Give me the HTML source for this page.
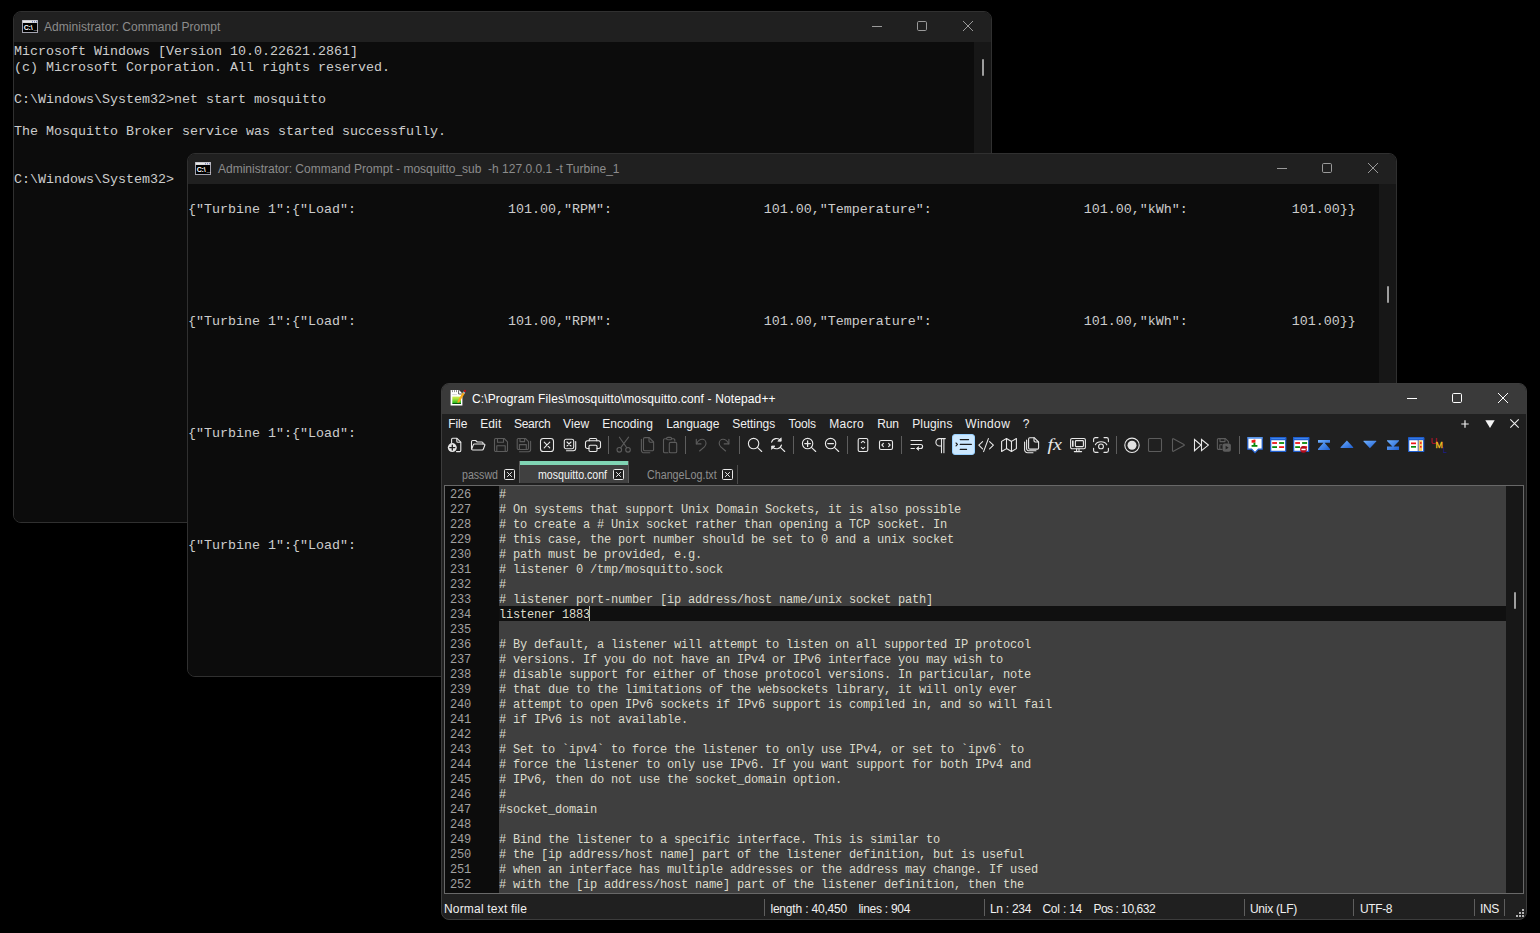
<!DOCTYPE html><html><head><meta charset="utf-8"><title>Desktop</title><style>
*{box-sizing:border-box}
html,body{margin:0;padding:0}
body{width:1540px;height:933px;background:#000;overflow:hidden;position:relative;font-family:"Liberation Sans",sans-serif;font-size:12px;color:#fff}
.win{position:absolute;border:1px solid #303030;border-radius:8px;overflow:hidden}
.tb{position:absolute;left:0;top:0;right:0;height:30px;background:#202020}
.tt{position:absolute;top:0;height:30px;line-height:30px;font-size:12px;color:#8c8c8c;white-space:pre}
.cmd{background:#0c0c0c}
.cmd .body{position:absolute;left:0;top:30px;right:0;bottom:0;background:#0c0c0c}
.cmd .sb{position:absolute;top:30px;right:0;bottom:0;width:17px;background:#171717}
.cmd .th{position:absolute;width:2px;background:#9e9e9e;border-radius:1px}
pre{margin:0}
.con{position:absolute;left:0;top:32px;font-family:"Liberation Mono",monospace;font-size:13.33px;letter-spacing:0;line-height:16px;color:#cccccc;white-space:pre}
.abs{position:absolute}
svg{position:absolute;overflow:visible}
.cap svg{stroke:#9a9a9a;fill:none;stroke-width:1}
.npp{background:#202020;border-color:#3c3c3c}
.npp .tb{background:#3a3a3a}
.npp .tt{color:#fff}
.npp .cap svg{stroke:#fff}
.menu span{position:absolute;top:0;line-height:20px;font-size:12px;color:#f0f0f0;white-space:pre}
.tab{position:absolute;font-size:10.6px;white-space:pre;line-height:14px}
.xb{position:absolute;width:11px;height:11px;border:1px solid #d8d8d8;border-radius:1px}
.ed{position:absolute;left:2px;top:101px;width:1080px;height:409px;border:1px solid #686868;background:#3f3f3f;overflow:hidden}
.code{position:absolute;left:54px;top:2px;font-family:"Liberation Mono",monospace;font-size:12px;letter-spacing:-0.2px;line-height:15px;color:#dcdccc;white-space:pre}
.ln{position:absolute;left:0;top:0;width:54px;height:407px;background:#0c0c0c}
.ln pre{position:absolute;left:5px;top:2px;font-family:"Liberation Mono",monospace;font-size:12px;letter-spacing:-0.2px;line-height:15px;color:#a0a0a0;white-space:pre}
.st span{position:absolute;top:1px;line-height:22px;font-size:12px;color:#f0f0f0;white-space:pre}
.st i{position:absolute;top:2px;width:1px;height:17px;background:#5e5e5e}
.sep{position:absolute;top:52px;width:1px;height:18px;background:#5e5e5e}
.ic{position:absolute;top:53px;width:16px;height:16px}
.ic svg{left:0;top:0;width:16px;height:16px;fill:none;stroke:#e8e8e8;stroke-width:1.1;stroke-linecap:round;stroke-linejoin:round}
.ic.d svg{stroke:#5c5c5c}
</style></head><body><div class="win cmd" style="left:13px;top:11px;width:979px;height:512px"><div class="body"></div><div class="tb"></div><svg style="left:8px;top:8px" width="16" height="13" viewBox="0 0 16 13"><rect x="0" y="0" width="16" height="13" fill="#a4a4b0"/><rect x="0.6" y="0.5" width="14.8" height="2.3" fill="#e6e6e6"/><path d="M10 1.2h1v1h-1zM12 1.2h1v1h-1zM14 1.2h1v1h-1z" fill="#5560a8"/><rect x="1" y="3" width="14" height="9" fill="#000"/><text x="1.7 6.5 8.7 11.7" y="10" font-family="Liberation Sans,sans-serif" font-size="7" font-weight="bold" fill="#fff">C:\_</text></svg><div class="tt" style="left:30px;letter-spacing:0.061px">Administrator: Command Prompt</div><div class="cap"><svg style="left:858px;top:9px" width="10" height="10" viewBox="0 0 10 10"><path d="M0 5.5H10"/></svg><svg style="left:903px;top:9px" width="10" height="10" viewBox="0 0 10 10"><rect x="0.5" y="0.5" width="9" height="9" rx="1.2"/></svg><svg style="left:949px;top:9px" width="10" height="10" viewBox="0 0 10 10"><path d="M0 0L10 10M10 0L0 10"/></svg></div><div class="sb"></div><div class="th" style="left:968px;top:47px;height:17px"></div><pre class="con">Microsoft Windows [Version 10.0.22621.2861]
(c) Microsoft Corporation. All rights reserved.

C:\Windows\System32&gt;net start mosquitto

The Mosquitto Broker service was started successfully.


C:\Windows\System32&gt;</pre></div><div class="win cmd" style="left:187px;top:153px;width:1210px;height:524px"><div class="body"></div><div class="tb"></div><svg style="left:7px;top:8px" width="16" height="13" viewBox="0 0 16 13"><rect x="0" y="0" width="16" height="13" fill="#a4a4b0"/><rect x="0.6" y="0.5" width="14.8" height="2.3" fill="#e6e6e6"/><path d="M10 1.2h1v1h-1zM12 1.2h1v1h-1zM14 1.2h1v1h-1z" fill="#5560a8"/><rect x="1" y="3" width="14" height="9" fill="#000"/><text x="1.7 6.5 8.7 11.7" y="10" font-family="Liberation Sans,sans-serif" font-size="7" font-weight="bold" fill="#fff">C:\_</text></svg><div class="tt" style="left:30px;letter-spacing:-0.0px">Administrator: Command Prompt - mosquitto_sub  -h 127.0.0.1 -t Turbine_1</div><div class="cap"><svg style="left:1089px;top:9px" width="10" height="10" viewBox="0 0 10 10"><path d="M0 5.5H10"/></svg><svg style="left:1134px;top:9px" width="10" height="10" viewBox="0 0 10 10"><rect x="0.5" y="0.5" width="9" height="9" rx="1.2"/></svg><svg style="left:1180px;top:9px" width="10" height="10" viewBox="0 0 10 10"><path d="M0 0L10 10M10 0L0 10"/></svg></div><div class="sb"></div><div class="th" style="left:1199px;top:132px;height:17px"></div><pre class="con">

{"Turbine 1":{"Load":                   101.00,"RPM":                   101.00,"Temperature":                   101.00,"kWh":             101.00}}






{"Turbine 1":{"Load":                   101.00,"RPM":                   101.00,"Temperature":                   101.00,"kWh":             101.00}}






{"Turbine 1":{"Load":                   101.00,"RPM":                   101.00,"Temperature":                   101.00,"kWh":             101.00}}






{"Turbine 1":{"Load":                   101.00,"RPM":                   101.00,"Temperature":                   101.00,"kWh":             101.00}}</pre></div><div class="win npp" style="left:441px;top:383px;width:1086px;height:537px"><div class="tb"></div><svg style="left:7px;top:5px" width="18" height="18" viewBox="0 0 18 18"><defs><linearGradient id="ng" x1="0" y1="0" x2="0" y2="1"><stop offset="0" stop-color="#d0ec48"/><stop offset="0.3" stop-color="#a8e040"/><stop offset="0.8" stop-color="#38c020"/><stop offset="0.86" stop-color="#0a6a08"/><stop offset="1" stop-color="#064a06"/></linearGradient></defs><path d="M1.6 1H10L13.4 4.4V16.4H1.6Z" fill="#fff"/><path d="M9.6 1.2V5H13.4" fill="none" stroke="#4a4a4a" stroke-width="0.9"/><path d="M2.8 1.6H3.9L3.35 3.5ZM4.9 1.6H6L5.45 3.5ZM7 1.6H8.1L7.55 3.5Z" fill="#303030"/><path d="M3.2 5.6H8" stroke="#b8b8b8" stroke-width="0.6"/><rect x="3.3" y="7.6" width="8.7" height="7.4" fill="url(#ng)"/><path d="M14.3 2.6L16.2 3.8L10.3 13.2L8.5 14.1L8.6 12Z" fill="#f8a818"/><path d="M14.3 2.6L16.2 3.8L15.6 4.8L13.7 3.6Z" fill="#8cacd4"/><circle cx="15.9" cy="1.9" r="1.15" fill="#c00c18"/></svg><div class="tt" style="left:30px;letter-spacing:0.13px">C:\Program Files\mosquitto\mosquitto.conf - Notepad++</div><div class="cap"><svg style="left:965px;top:9px" width="10" height="10" viewBox="0 0 10 10"><path d="M0 5.5H10"/></svg><svg style="left:1010px;top:9px" width="10" height="10" viewBox="0 0 10 10"><rect x="0.5" y="0.5" width="9" height="9" rx="1.2"/></svg><svg style="left:1056px;top:9px" width="10" height="10" viewBox="0 0 10 10"><path d="M0 0L10 10M10 0L0 10"/></svg></div><div class="menu abs" style="left:0;top:30px;width:1084px;height:20px"><span style="left:6.2px;letter-spacing:-0.036px">File</span><span style="left:38.2px;letter-spacing:0.128px">Edit</span><span style="left:71.9px;letter-spacing:-0.255px">Search</span><span style="left:121.0px;letter-spacing:0.151px">View</span><span style="left:160.2px;letter-spacing:0.082px">Encoding</span><span style="left:224.2px;letter-spacing:-0.024px">Language</span><span style="left:290.2px;letter-spacing:-0.057px">Settings</span><span style="left:346.5px;letter-spacing:-0.123px">Tools</span><span style="left:387.2px;letter-spacing:0.271px">Macro</span><span style="left:435.2px;letter-spacing:-0.139px">Run</span><span style="left:470.2px;letter-spacing:0.149px">Plugins</span><span style="left:523.2px;letter-spacing:0.385px">Window</span><span style="left:580.8px;letter-spacing:-0.088px">?</span></div><svg style="left:1019px;top:36px" width="8" height="8" viewBox="0 0 8 8"><path d="M4 0.3V7.7M0.3 4H7.7" stroke="#f0f0f0" stroke-width="1.2" fill="none"/></svg><svg style="left:1043px;top:36px" width="10" height="8" viewBox="0 0 10 8"><path d="M0.3 0.3H9.7L5 8Z" fill="#f4f4f4"/></svg><svg style="left:1068px;top:35px" width="9" height="9" viewBox="0 0 9 9"><path d="M0.3 0.3L8.7 8.7M8.7 0.3L0.3 8.7" stroke="#f0f0f0" stroke-width="1.1" fill="none"/></svg><div class="ic " style="left:5px;"><svg viewBox="0 0 16 16"><path d="M4.6 5.5V2.3A1 1 0 0 1 5.6 1.3H10L13.8 5.1V13.6A1 1 0 0 1 12.8 14.6H9.5"/><path d="M9.8 1.5V4.3A1 1 0 0 0 10.8 5.3H13.6"/><circle cx="5.3" cy="10.6" r="4.5" fill="#e6e6e6" stroke="none"/><path d="M5.3 8.1V13.1M2.8 10.6H7.8" stroke="#202020" stroke-width="1.3"/></svg></div><div class="ic " style="left:28px;"><svg viewBox="0 0 16 16"><path d="M1.5 11.8V4.8A1.3 1.3 0 0 1 2.8 3.5H5.6L7.2 5H11.8A1.3 1.3 0 0 1 13.1 6.3V7"/><path d="M1.6 12.2L3.3 7.9A1.3 1.3 0 0 1 4.5 7H14A0.9 0.9 0 0 1 14.8 8.2L13.4 12A1.4 1.4 0 0 1 12.1 13H2.6A1.1 1.1 0 0 1 1.6 12.2Z"/></svg></div><div class="ic d" style="left:51px;"><svg viewBox="0 0 16 16"><path d="M2.8 1.5H11.2L14.5 4.8V13.2A1.3 1.3 0 0 1 13.2 14.5H2.8A1.3 1.3 0 0 1 1.5 13.2V2.8A1.3 1.3 0 0 1 2.8 1.5Z"/><path d="M4.5 1.5V5.2H10.5V1.5"/><path d="M3.8 14.5V8.8H12.2V14.5"/></svg></div><div class="ic d" style="left:74px;"><svg viewBox="0 0 16 16"><path d="M2.4 1.5H9.4L12.5 4.6V11.3A1.2 1.2 0 0 1 11.3 12.5H2.4A1.2 1.2 0 0 1 1.2 11.3V2.7A1.2 1.2 0 0 1 2.4 1.5Z"/><path d="M4 1.5V4.6H8.6V1.5"/><path d="M3.4 12.5V7.6H10.3V12.5"/><path d="M14.6 4.4V12.6A2.2 2.2 0 0 1 12.4 14.8H3.5"/></svg></div><div class="ic " style="left:97px;"><svg viewBox="0 0 16 16"><rect x="1.5" y="1.5" width="13" height="13" rx="2.8"/><path d="M5.2 5.2L10.8 10.8M10.8 5.2L5.2 10.8"/></svg></div><div class="ic " style="left:120px;"><svg viewBox="0 0 16 16"><rect x="2.3" y="2.3" width="9.4" height="9.4" rx="1.8"/><path d="M5 5L9 9M9 5L5 9"/><path d="M13.7 4.5V11.3A2.5 2.5 0 0 1 11.2 13.8H4.5"/></svg></div><div class="ic " style="left:143px;"><svg viewBox="0 0 16 16"><path d="M4.2 3.8V2.8A1.3 1.3 0 0 1 5.5 1.5H10.5A1.3 1.3 0 0 1 11.8 2.8V3.8"/><path d="M4 11.5H2.3A1.8 1.8 0 0 1 0.5 9.7V5.6A1.8 1.8 0 0 1 2.3 3.8H13.7A1.8 1.8 0 0 1 15.5 5.6V9.7A1.8 1.8 0 0 1 13.7 11.5H12"/><rect x="4" y="8.3" width="8" height="6.2" rx="1.2"/></svg></div><div class="sep" style="left:166px"></div><div class="ic d" style="left:174px;"><svg viewBox="0 0 16 16"><circle cx="3.3" cy="12.8" r="2.3"/><circle cx="12" cy="12.8" r="2.3"/><path d="M3.4 0.2L10.8 10.8M12.6 0.2L4.6 10.8"/></svg></div><div class="ic d" style="left:197px;"><svg viewBox="0 0 16 16"><path d="M5.8 0.6H10.2L14.6 5V12.4A1.3 1.3 0 0 1 13.3 13.7H5.8A1.3 1.3 0 0 1 4.5 12.4V1.9A1.3 1.3 0 0 1 5.8 0.6Z"/><path d="M10 0.8V4A1.2 1.2 0 0 0 11.2 5.2H14.4"/><path d="M2.4 2.2V13.2A2.6 2.6 0 0 0 5 15.8H10.8"/></svg></div><div class="ic d" style="left:220px;"><svg viewBox="0 0 16 16"><path d="M6 15.8H2.8A1.3 1.3 0 0 1 1.5 14.5V3A1.3 1.3 0 0 1 2.8 1.7H4.5M9.7 1.7H11.5A1.3 1.3 0 0 1 12.8 3V4"/><rect x="4.6" y="0.4" width="5" height="2.4" rx="1.2"/><rect x="7.3" y="5.4" width="7.4" height="10.4" rx="1.3"/></svg></div><div class="sep" style="left:243px"></div><div class="ic d" style="left:251px;"><svg viewBox="0 0 16 16"><path d="M3.3 2.2V6.9H8"/><path d="M3.5 6.7C5 3.8 7 2.3 9.2 2.3C11.5 2.3 13 4.2 13 6.3C13 7.8 12.4 8.9 11.4 9.8L6.6 14"/></svg></div><div class="ic d" style="left:274px;"><svg viewBox="0 0 16 16"><g transform="translate(16.2 0) scale(-1 1)"><path d="M3.3 2.2V6.9H8"/><path d="M3.5 6.7C5 3.8 7 2.3 9.2 2.3C11.5 2.3 13 4.2 13 6.3C13 7.8 12.4 8.9 11.4 9.8L6.6 14"/></g></svg></div><div class="sep" style="left:297px"></div><div class="ic " style="left:305px;"><svg viewBox="0 0 16 16"><circle cx="6.6" cy="6.6" r="5.2"/><path d="M10.4 10.4L14.7 14.5"/></svg></div><div class="ic " style="left:328px;"><svg viewBox="0 0 16 16"><path d="M1.6 5.2A5.2 5.2 0 0 1 10.6 3.4"/><path d="M11.5 8A5.2 5.2 0 0 1 2.4 9.8"/><path d="M11.2 1.2V4.2H8.2Z" fill="#e6e6e6" stroke-width="0.8"/><path d="M1.6 12V9H4.6Z" fill="#e6e6e6" stroke-width="0.8"/><path d="M10.4 10.4L14.7 14.5"/></svg></div><div class="sep" style="left:351px"></div><div class="ic " style="left:359px;"><svg viewBox="0 0 16 16"><circle cx="6.6" cy="6.6" r="5.2"/><path d="M10.4 10.4L14.7 14.5"/><path d="M6.6 3.8V9.4M3.8 6.6H9.4" stroke-width="1.3"/></svg></div><div class="ic " style="left:382px;"><svg viewBox="0 0 16 16"><circle cx="6.6" cy="6.6" r="5.2"/><path d="M10.4 10.4L14.7 14.5"/><path d="M3.8 6.6H9.4" stroke-width="1.3"/></svg></div><div class="sep" style="left:405px"></div><div class="ic " style="left:413px;"><svg viewBox="0 0 16 16"><rect x="3.2" y="1.5" width="9.6" height="13" rx="1.6"/><path d="M6.3 5.7L8 4.2L9.7 5.7M6.3 10.3L8 11.8L9.7 10.3"/></svg></div><div class="ic " style="left:436px;"><svg viewBox="0 0 16 16"><rect x="1.5" y="3.5" width="13" height="9" rx="1.6"/><path d="M5.4 6.4L3.9 8L5.4 9.6M10.6 6.4L12.1 8L10.6 9.6"/></svg></div><div class="sep" style="left:459px"></div><div class="ic " style="left:467px;"><svg viewBox="0 0 16 16"><path d="M2 3.5H12.8M2 7.5H11.6A2 2 0 0 1 11.6 11.5H8M2 11.5H5.4"/><path d="M9.3 9.9L7.5 11.5L9.3 13.1Z" fill="#e6e6e6" stroke-width="0.8"/></svg></div><div class="ic " style="left:490px;"><svg viewBox="0 0 16 16"><path d="M13.3 1.6H7.6A3.7 3.7 0 0 0 7.6 9H9.4"/><path d="M9.5 1.6V15.8M11.9 1.6V15.8"/></svg></div><div class="abs" style="left:510px;top:50px;width:23px;height:21px;background:#cce8ff;border:1px solid #99d1ff;border-radius:3px"></div><div class="ic " style="left:513px;"><svg viewBox="0 0 16 16"><path d="M5.2 2.6H13.6M5.2 7.4H16.4M5.2 12.4H11.6M1 6L2.5 7.4L1 8.9" stroke="#1c1c1c" stroke-width="1.1"/></svg></div><div class="ic " style="left:536px;"><svg viewBox="0 0 16 16"><path d="M4.6 4.6L0.8 8.2L4.6 11.8M11.6 4.6L15.4 8.2L11.6 11.8M10.4 1.6L5.6 14.6"/></svg></div><div class="ic " style="left:559px;"><svg viewBox="0 0 16 16"><path d="M0.6 4.4L5.5 1.5L10.5 4.4L15.4 1.5V11.6L10.5 14.5L5.5 11.6L0.6 14.5Z"/><path d="M5.5 1.5V11.6M10.5 4.4V14.5"/></svg></div><div class="ic " style="left:582px;"><svg viewBox="0 0 16 16"><path d="M5.8 0.7H10.2L14.6 5V10.9A1.2 1.2 0 0 1 13.4 12.1H5.8A1.2 1.2 0 0 1 4.6 10.9V1.9A1.2 1.2 0 0 1 5.8 0.7Z"/><path d="M10 0.9V3.8A1.2 1.2 0 0 0 11.2 5H14.4"/><path d="M2.6 3V11.4A2.4 2.4 0 0 0 5 13.8H12"/><path d="M0.6 5V12.8A3 3 0 0 0 3.6 15.8H9"/></svg></div><div class="ic " style="left:605px;"><svg viewBox="0 0 16 16"><text x="0.5" y="13.2" font-family="Liberation Serif,serif" font-style="italic" font-size="17" fill="#e6e6e6" stroke="none" textLength="14.5" lengthAdjust="spacingAndGlyphs">fx</text></svg></div><div class="ic " style="left:628px;"><svg viewBox="0 0 16 16"><rect x="0.6" y="1.5" width="14.8" height="10.3" rx="1.5"/><rect x="5.4" y="3.6" width="8" height="6" rx="0.8"/><path d="M2.8 3.4V9.8" stroke-width="1.6" stroke-linecap="butt"/><path d="M6.6 12V14.4M9 12V14.4M4.3 14.6H11.6"/></svg></div><div class="ic " style="left:651px;"><svg viewBox="0 0 16 16"><path d="M0.6 4.6V2.4A1.8 1.8 0 0 1 2.4 0.6H5M11 0.6H13.6A1.8 1.8 0 0 1 15.4 2.4V4.6M15.4 11.2V13.6A1.8 1.8 0 0 1 13.6 15.4H11M5 15.4H2.4A1.8 1.8 0 0 1 0.6 13.6V11.2"/><path d="M2.4 7.8C4.4 3.8 11.6 3.8 13.8 7.8"/><circle cx="8" cy="9.4" r="2.4"/></svg></div><div class="sep" style="left:674px"></div><div class="ic " style="left:682px;"><svg viewBox="0 0 16 16"><circle cx="8" cy="8.3" r="7.2"/><circle cx="8" cy="8.3" r="4.5" fill="#e0e0e0" stroke="none"/></svg></div><div class="ic d" style="left:705px;"><svg viewBox="0 0 16 16"><rect x="1.5" y="1.5" width="13" height="13" rx="1.2"/></svg></div><div class="ic d" style="left:728px;"><svg viewBox="0 0 16 16"><path d="M2.5 2.2V13.8A0.6 0.6 0 0 0 3.4 14.3L14 8.6A0.6 0.6 0 0 0 14 7.5L3.4 1.7A0.6 0.6 0 0 0 2.5 2.2Z"/></svg></div><div class="ic " style="left:751px;"><svg viewBox="0 0 16 16"><path d="M1.5 2.5V13.7L8 8.1ZM8.5 2.5V13.7L15.4 8.1Z" stroke-linejoin="miter"/></svg></div><div class="ic d" style="left:774px;"><svg viewBox="0 0 16 16"><path d="M6 12.4H2.6A1.2 1.2 0 0 1 1.4 11.2V2.8A1.2 1.2 0 0 1 2.6 1.6H9.4L12.4 4.6V6"/><path d="M4 1.6V4.6H9V1.6M3.8 12.4V7.8H6"/><rect x="6.6" y="6.5" width="8.3" height="8.3" rx="2" fill="#5c5c5c" stroke="none"/><path d="M9.6 8.8V12.6L12.6 10.7Z" fill="#202020" stroke="none"/></svg></div><div class="sep" style="left:797px"></div><div class="ic " style="left:805px;"><svg viewBox="0 0 16 16"><path d="M0.8 0.8H15.2V12.2H11.4L8 15.6L4.6 12.2H0.8Z" fill="#fff" stroke="#1f5fd0" stroke-width="1.2" stroke-linejoin="miter"/><path d="M0.8 0.8H15.2" stroke="#6aa8f8" stroke-width="1.2"/><rect x="4.6" y="3.1" width="3.8" height="2.6" fill="#f01818" stroke="none"/><rect x="6.5" y="2.6" width="1.9" height="1" fill="#f01818" stroke="none"/><rect x="6.5" y="5.7" width="1.9" height="2.4" fill="#0a8a0a" stroke="none"/><rect x="4.6" y="8" width="5.8" height="1.8" fill="#0a8a0a" stroke="none"/></svg></div><div class="ic " style="left:828px;"><svg viewBox="0 0 16 16"><rect x="0.7" y="0.7" width="15" height="13.6" fill="#fff" stroke="#1f5fd0" stroke-width="1.2"/><rect x="0.7" y="0.7" width="15" height="1.9" fill="#4a90f0" stroke="#1f5fd0" stroke-width="1.2"/><rect x="2.2" y="5.1" width="4.8" height="1.8" fill="#f01818" stroke="none"/><rect x="9.1" y="5.1" width="5" height="1.8" fill="#0a8a0a" stroke="none"/><rect x="2.2" y="9.2" width="4.8" height="1.8" fill="#0a8a0a" stroke="none"/><rect x="9.1" y="9.2" width="5" height="1.8" fill="#f01818" stroke="none"/></svg></div><div class="ic " style="left:851px;"><svg viewBox="0 0 16 16"><rect x="0.7" y="0.7" width="15" height="13.6" fill="#fff" stroke="#1f5fd0" stroke-width="1.2"/><rect x="0.7" y="0.7" width="15" height="1.9" fill="#4a90f0" stroke="#1f5fd0" stroke-width="1.2"/><rect x="2.2" y="5.1" width="4.8" height="1.8" fill="#f01818" stroke="none"/><rect x="9.1" y="5.1" width="5" height="1.8" fill="#0a8a0a" stroke="none"/><rect x="2.2" y="9.2" width="4.8" height="1.8" fill="#0a8a0a" stroke="none"/><rect x="9.1" y="9.2" width="5" height="1.8" fill="#f01818" stroke="none"/><circle cx="10.5" cy="12.4" r="3.3" fill="#b40c1c" stroke="none"/><rect x="8.4" y="11.7" width="4.2" height="1.5" fill="#fff" stroke="none"/></svg></div><div class="ic " style="left:874px;"><svg viewBox="0 0 16 16"><defs><linearGradient id="bg" x1="0" y1="0" x2="1" y2="1"><stop offset="0" stop-color="#6fb0ff"/><stop offset="1" stop-color="#1f5fd0"/></linearGradient></defs><path d="M2 3.1H14V5.8H8.6L14 12V12.9H2V12L7.4 5.8H2Z" fill="url(#bg)" stroke="none"/></svg></div><div class="ic " style="left:897px;"><svg viewBox="0 0 16 16"><path d="M7.9 3.6L14.2 10.2V11H1.6V10.2Z" fill="url(#bg)" stroke="none"/></svg></div><div class="ic " style="left:920px;"><svg viewBox="0 0 16 16"><path d="M7.9 11.2L14.2 4.6V3.8H1.6V4.6Z" fill="url(#bg)" stroke="none"/></svg></div><div class="ic " style="left:943px;"><svg viewBox="0 0 16 16"><path d="M2 12.9H14V9.6H8.6L14 4V3.2H2V4L7.4 9.6H2Z" fill="url(#bg)" stroke="none"/></svg></div><div class="ic " style="left:966px;"><svg viewBox="0 0 16 16"><rect x="0.7" y="0.9" width="15" height="13.6" fill="#fff" stroke="#1f5fd0" stroke-width="1.2"/><rect x="0.7" y="0.9" width="15" height="1.7" fill="#4a90f0" stroke="#1f5fd0" stroke-width="1.2"/><rect x="10.6" y="3.5" width="3.6" height="10.4" fill="#f8c860" stroke="none"/><path d="M10.2 3.4V14" stroke="#2a4a90" stroke-width="0.8"/><rect x="3" y="5.5" width="5" height="1.7" fill="#f01818" stroke="none"/><rect x="3" y="9" width="5" height="1.7" fill="#0a8a0a" stroke="none"/><rect x="12" y="5.2" width="1.6" height="1.6" fill="#f01818" stroke="none"/><rect x="12" y="9" width="1.6" height="1.6" fill="#f01818" stroke="none"/></svg></div><div class="ic " style="left:989px;"><svg viewBox="0 0 16 16"><text x="-0.6" y="7.2" font-family="Liberation Sans,sans-serif" font-size="9.5" fill="#c0102c" stroke="none">U</text><text x="4.6" y="11.1" font-family="Liberation Sans,sans-serif" font-size="9.8" fill="#f8c020" stroke="#f8c020" stroke-width="0.3" textLength="7.4" lengthAdjust="spacingAndGlyphs">M</text><text x="12" y="15.9" font-family="Liberation Sans,sans-serif" font-size="9" fill="#1c1c8c" stroke="none" textLength="4" lengthAdjust="spacingAndGlyphs">L</text></svg></div><div class="abs" style="left:77px;top:77px;width:110px;height:22px;background:#404040;border-left:1px solid #5a5a5a;border-right:1px solid #5a5a5a"></div><div class="abs" style="left:78px;top:77px;width:108px;height:4px;background:#80d4b4"></div><div class="tab" style="left:20.399999999999977px;top:84px;color:#8e8e8e;font-size:12px;transform:scaleX(0.885);transform-origin:0 0">passwd</div><div class="tab" style="left:96.39999999999998px;top:84px;color:#f4f4f4;font-size:12px;transform:scaleX(0.885);transform-origin:0 0">mosquitto.conf</div><div class="tab" style="left:204.79999999999995px;top:84px;color:#8e8e8e;font-size:12px;transform:scaleX(0.893);transform-origin:0 0">ChangeLog.txt</div><svg style="left:62px;top:85px" width="11" height="11" viewBox="0 0 11 11"><rect x="0.5" y="0.5" width="10" height="10" rx="1" fill="#202020" stroke="#e8e8e8" stroke-width="1"/><path d="M3.2 3.2L7.8 7.8M7.8 3.2L3.2 7.8" stroke="#e8e8e8" stroke-width="1" fill="none"/></svg><svg style="left:171px;top:85px" width="11" height="11" viewBox="0 0 11 11"><rect x="0.5" y="0.5" width="10" height="10" rx="1" fill="#202020" stroke="#e8e8e8" stroke-width="1"/><path d="M3.2 3.2L7.8 7.8M7.8 3.2L3.2 7.8" stroke="#e8e8e8" stroke-width="1" fill="none"/></svg><svg style="left:280px;top:85px" width="11" height="11" viewBox="0 0 11 11"><rect x="0.5" y="0.5" width="10" height="10" rx="1" fill="#202020" stroke="#e8e8e8" stroke-width="1"/><path d="M3.2 3.2L7.8 7.8M7.8 3.2L3.2 7.8" stroke="#e8e8e8" stroke-width="1" fill="none"/></svg><div class="abs" style="left:295px;top:81px;width:1px;height:19px;background:#4a4a4a"></div><div class="ed"><div class="abs" style="left:54px;top:120px;width:1007px;height:15px;background:#101010"></div><div class="ln"><pre>226
227
228
229
230
231
232
233
234
235
236
237
238
239
240
241
242
243
244
245
246
247
248
249
250
251
252</pre></div><pre class="code">#
# On systems that support Unix Domain Sockets, it is also possible
# to create a # Unix socket rather than opening a TCP socket. In
# this case, the port number should be set to 0 and a unix socket
# path must be provided, e.g.
# listener 0 /tmp/mosquitto.sock
#
# listener port-number [ip address/host name/unix socket path]
listener 1883

# By default, a listener will attempt to listen on all supported IP protocol
# versions. If you do not have an IPv4 or IPv6 interface you may wish to
# disable support for either of those protocol versions. In particular, note
# that due to the limitations of the websockets library, it will only ever
# attempt to open IPv6 sockets if IPv6 support is compiled in, and so will fail
# if IPv6 is not available.
#
# Set to `ipv4` to force the listener to only use IPv4, or set to `ipv6` to
# force the listener to only use IPv6. If you want support for both IPv4 and
# IPv6, then do not use the socket_domain option.
#
#socket_domain

# Bind the listener to a specific interface. This is similar to
# the [ip address/host name] part of the listener definition, but is useful
# when an interface has multiple addresses or the address may change. If used
# with the [ip address/host name] part of the listener definition, then the</pre><div class="abs" style="left:144px;top:120px;width:1px;height:15px;background:#b4bcac"></div><div class="abs" style="left:1061px;top:0;width:17px;height:407px;background:#171717"></div><div class="abs" style="left:1069px;top:106px;width:2px;height:17px;background:#9e9e9e;border-radius:1px"></div></div><div class="st abs" style="left:0;top:513px;width:1084px;height:22px"><span style="left:1.9px;letter-spacing:0.198px">Normal text file</span><span style="left:328.4px;letter-spacing:-0.18px">length : 40,450</span><span style="left:416.4px;letter-spacing:-0.273px">lines : 904</span><span style="left:547.9px;letter-spacing:-0.272px">Ln : 234</span><span style="left:600.4px;letter-spacing:-0.207px">Col : 14</span><span style="left:651.4px;letter-spacing:-0.474px">Pos : 10,632</span><span style="left:807.9px;letter-spacing:-0.238px">Unix (LF)</span><span style="left:917.9px;letter-spacing:-0.36px">UTF-8</span><span style="left:1037.9px;letter-spacing:-0.272px">INS</span><i style="left:322px"></i><i style="left:542px"></i><i style="left:802px"></i><i style="left:911px"></i><i style="left:1032px"></i><i style="left:1062px"></i><svg style="left:1073px;top:11px" width="9" height="9" viewBox="0 0 9 9"><path d="M7 1h2v2h-2zM4 4h2v2h-2zM7 4h2v2h-2zM1 7h2v2h-2zM4 7h2v2h-2zM7 7h2v2h-2z" fill="#b4b4b4"/></svg></div></div></body></html>
